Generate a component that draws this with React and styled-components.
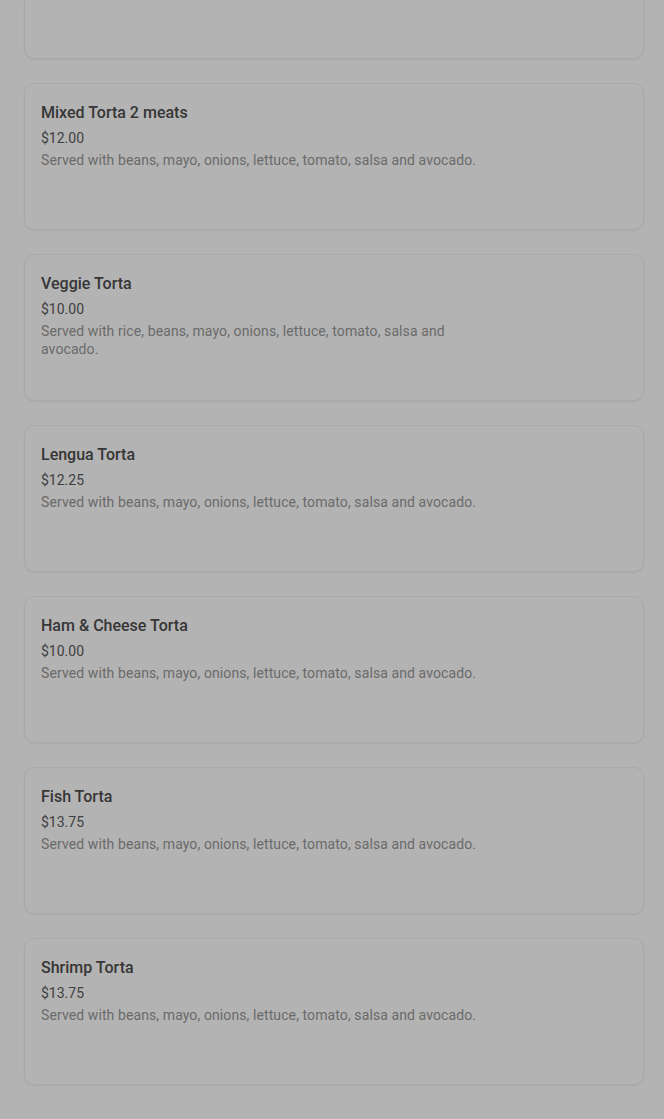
import React from "react";
import styled, { createGlobalStyle, css } from "styled-components";

const Global = createGlobalStyle`
  html, body { margin: 0; padding: 0; background: #b3b3b3; }
  body { font-family: Roboto, "Liberation Sans", Arial, sans-serif; -webkit-font-smoothing: antialiased; }
`;

const Page = styled.div`
  height: 1119px;
  overflow: hidden;
  background: #b3b3b3;
`;

const List = styled.div`
  display: flex;
  flex-direction: column;
  gap: 24px;
  padding: 0 20px 0 24px;
`;

const Card = styled.div`
  box-sizing: border-box;
  height: 147px;
  border: 1px solid #a9a9a9;
  border-radius: 10px;
  box-shadow: 0 1px 2px rgba(0, 0, 0, 0.06);
  padding: 16px 16px;
  display: flex;
  flex-direction: column;
  ${(p) =>
    p.$tail &&
    css`
      height: 59px;
      border-top: none;
      border-top-left-radius: 0;
      border-top-right-radius: 0;
    `}
`;

const Title = styled.div`
  font-size: 16px;
  font-weight: 500;
  line-height: 24px;
  color: #363636;
  margin-top: 1px;
`;

const Price = styled.div`
  font-size: 14px;
  line-height: 20px;
  color: #404040;
  margin-top: 3px;
`;

const Desc = styled.div`
  font-size: 14px;
  line-height: 18px;
  letter-spacing: 0.1px;
  color: #6a6a6a;
  max-width: 445px;
  margin-top: 3px;
`;

const items = [
  { name: "Mixed Torta 2 meats", price: "$12.00", desc: "Served with beans, mayo, onions, lettuce, tomato, salsa and avocado." },
  { name: "Veggie Torta", price: "$10.00", desc: "Served with rice, beans, mayo, onions, lettuce, tomato, salsa and avocado." },
  { name: "Lengua Torta", price: "$12.25", desc: "Served with beans, mayo, onions, lettuce, tomato, salsa and avocado." },
  { name: "Ham & Cheese Torta", price: "$10.00", desc: "Served with beans, mayo, onions, lettuce, tomato, salsa and avocado." },
  { name: "Fish Torta", price: "$13.75", desc: "Served with beans, mayo, onions, lettuce, tomato, salsa and avocado." },
  { name: "Shrimp Torta", price: "$13.75", desc: "Served with beans, mayo, onions, lettuce, tomato, salsa and avocado." },
];

export default function App() {
  return (
    <Page>
      <Global />
      <List>
        <Card $tail />
        {items.map((it, i) => (
          <Card key={i}>
            <Title>{it.name}</Title>
            <Price>{it.price}</Price>
            <Desc>{it.desc}</Desc>
          </Card>
        ))}
      </List>
    </Page>
  );
}
